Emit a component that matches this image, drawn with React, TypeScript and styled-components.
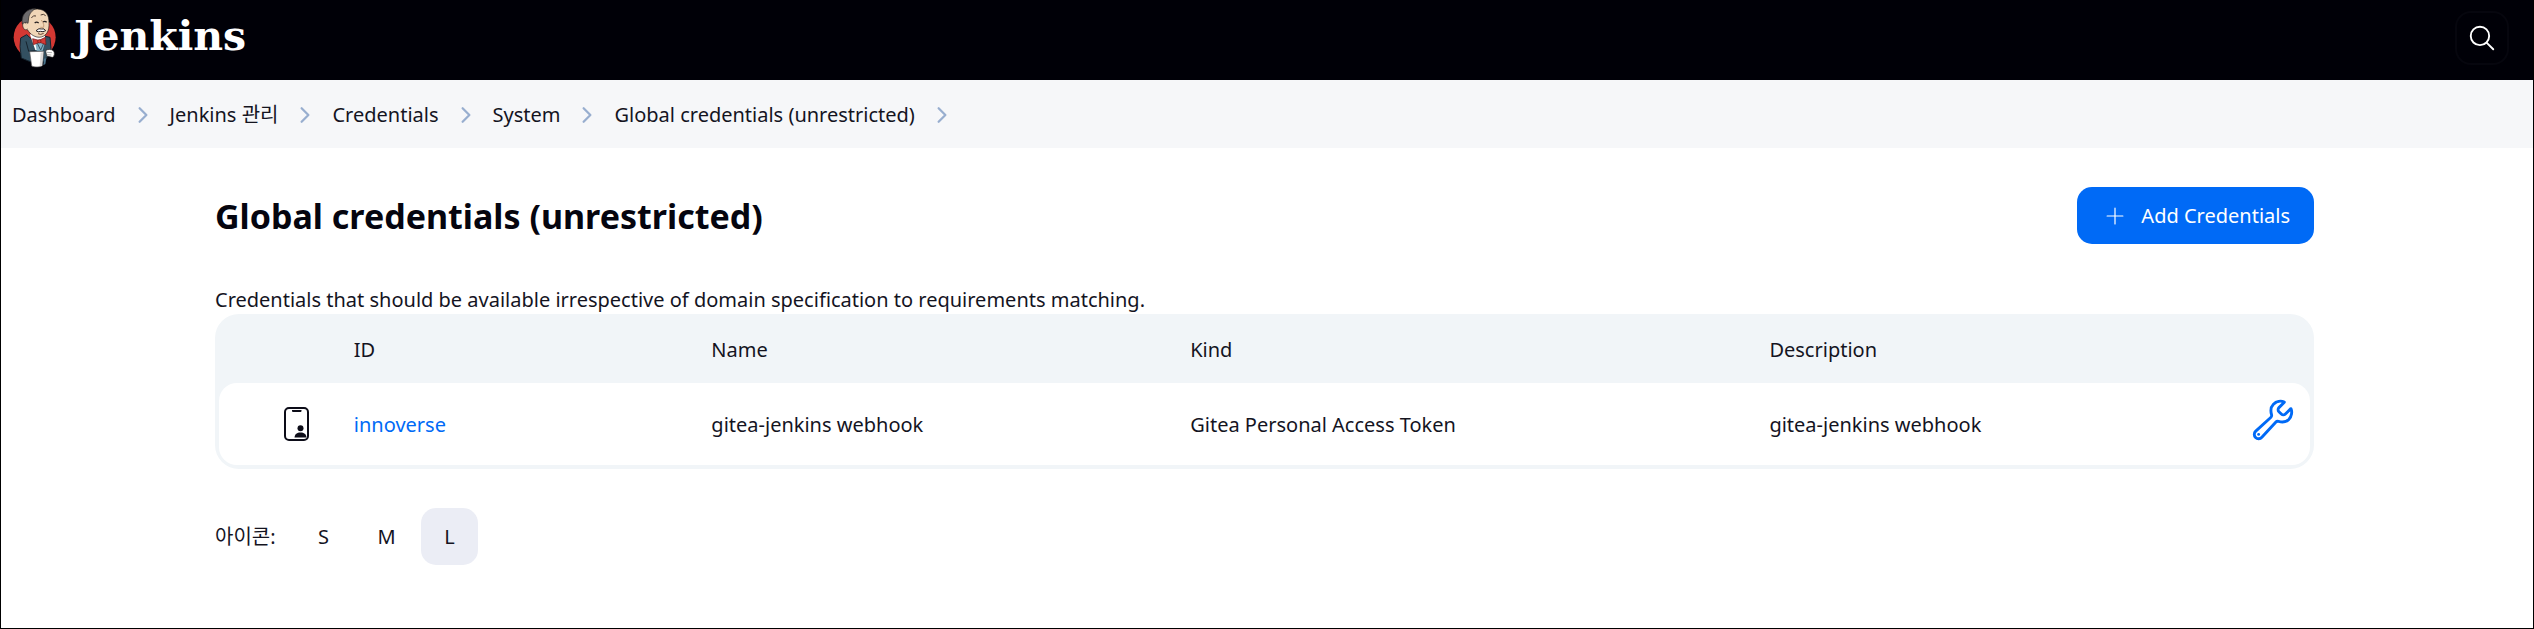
import React from "react";
import styled, { createGlobalStyle } from "styled-components";
import {
  IoAddOutline,
  IoBuildOutline,
  IoChevronForwardOutline,
  IoSearchOutline,
} from "react-icons/io5";

const GlobalStyle = createGlobalStyle`
  *, *::before, *::after { box-sizing: border-box; }
  body {
    margin: 0;
    background: #ffffff;
    color: #14141f;
    font-family: "Noto Sans", "Noto Sans CJK KR", sans-serif;
    font-size: 20px;
    line-height: 30px;
  }
  button { font: inherit; color: inherit; border: 0; cursor: pointer; }
  a { color: inherit; text-decoration: none; }
`;

const Page = styled.div`
  display: flex;
  flex-direction: column;
  min-height: 100vh;
  border: solid #000000;
  border-width: 0 1px 1px;
`;

const Header = styled.header`
  display: flex;
  align-items: center;
  justify-content: space-between;
  height: 80px;
  padding: 0 24px 4px 11px;
  background: #000007;
  color: #ffffff;
`;

const Brand = styled.a`
  display: flex;
  align-items: center;
  gap: 16px;
`;

const Wordmark = styled.span`
  padding-bottom: 4px;
  font-family: "DejaVu Serif", serif;
  font-size: 41px;
  font-weight: 700;
  line-height: 48px;
`;

const SearchButton = styled.button`
  display: flex;
  align-items: center;
  justify-content: center;
  width: 54px;
  height: 54px;
  border: 2px solid #06060e;
  border-radius: 16px;
  background: transparent;
  color: #ffffff;
  font-size: 30px;
`;

const Breadcrumbs = styled.nav`
  background: #f6f7f9;
`;

const CrumbList = styled.ol`
  display: flex;
  align-items: center;
  height: 68px;
  margin: 0;
  padding: 2px 11px 0;
  list-style: none;
`;

const Crumb = styled.li`
  display: flex;
  align-items: center;
  white-space: nowrap;

  svg {
    width: 24px;
    height: 24px;
    margin: 0 15px;
    color: #98aecf;
  }
`;

const Main = styled.main`
  padding: 39px 219px 60px 214px;
`;

const TitleBar = styled.div`
  display: flex;
  align-items: center;
  justify-content: space-between;
`;

const Title = styled.h1`
  margin: 0;
  font-size: 34px;
  line-height: 48px;
  font-weight: 700;
  color: #05050f;
`;

const AddButton = styled.button`
  display: flex;
  align-items: center;
  gap: 12px;
  height: 57px;
  padding: 0 24px;
  border-radius: 15px;
  background: #006af6;
  color: #ffffff;

  svg {
    width: 28px;
    height: 28px;
  }

  svg path {
    stroke-width: 22px;
  }
`;

const Intro = styled.p`
  margin: 41px 0 0;
  line-height: 29px;
`;

const TableFrame = styled.div`
  padding: 0 4px 4px;
  border-radius: 24px;
  background: #f1f5f8;
`;

const Table = styled.table`
  width: 100%;
  table-layout: fixed;
  border-collapse: separate;
  border-spacing: 0;
`;

const Column = styled.col<{ $width: string }>`
  width: ${(p) => p.$width};
`;

const HeadCell = styled.th`
  height: 69px;
  padding: 2px 24px 0;
  text-align: left;
  font-weight: 400;
`;

const Cell = styled.td`
  height: 82px;
  padding: 2px 24px 0;
  background: #ffffff;

  &:first-child { border-radius: 18px 0 0 18px; }
  &:last-child { border-radius: 0 18px 18px 0; }
`;

const IconCell = styled(Cell)`
  padding: 0 16px 0 65px;

  svg { display: block; }
`;

const ActionCell = styled(Cell)`
  padding: 0 14px 8px;
`;

const CredentialLink = styled.a`
  color: #006af6;
`;

const UpdateLink = styled.a`
  display: flex;
  justify-content: flex-end;
  color: #006af6;
  font-size: 46px;
`;

const SizeBar = styled.div`
  display: flex;
  align-items: center;
  gap: 6px;
  margin-top: 39px;
`;

const SizeLabel = styled.span`
  width: 74px;
`;

const SizeButton = styled.button<{ $active?: boolean }>`
  width: 57px;
  height: 57px;
  padding: 0;
  border-radius: 15px;
  background: ${(p) => (p.$active ? "#ebedf5" : "transparent")};
`;

const ButlerLogo = () => (
  <svg width="46" height="64" viewBox="36 18 138 192" aria-hidden="true">
    <circle cx="104" cy="112" r="63" fill="#d33833" />
    <path d="M62 114 L80 104 L104 126 L132 108 L150 112 L153 146 L146 166 L132 184 L88 184 L64 174 L60 140 Z" fill="#335061" stroke="#15232e" strokeWidth="3" />
    <path d="M90 104 L102 96 L134 102 L136 120 L124 150 L106 150 Z" fill="#ffffff" />
    <path d="M106 128 L136 124 L128 152 L110 152 Z" fill="#81b0c4" />
    <path d="M112 130 L122 150 L132 128" fill="none" stroke="#335061" strokeWidth="3" />
    <path d="M74 62 C72 36 90 27 112 27 C138 28 148 46 147 70 C148 91 141 106 124 111 C106 115 90 102 83 90 C74 84 72 70 74 62 Z" fill="#f0d6b7" stroke="#231f20" strokeWidth="2" />
    <path d="M67 72 C62 46 78 26 108 25 C94 33 88 42 86 54 L84 70 L78 66 L72 74 Z" fill="#6d6b6d" stroke="#231f20" strokeWidth="2" />
    <path d="M79 71 C70 62 63 76 73 88 Q78 92 83 87" fill="#f0d6b7" stroke="#231f20" strokeWidth="2" />
    <path d="M94 54 Q100 44 108 48" fill="none" stroke="#4b3a30" strokeWidth="3" />
    <path d="M122 45 Q131 40 137 47" fill="none" stroke="#4b3a30" strokeWidth="3" />
    <path d="M104 69 Q110 64 116 69 M129 66 Q135 62 140 67" fill="none" stroke="#231f20" strokeWidth="4" />
    <path d="M124 60 Q135 76 130 82 L121 82" fill="none" stroke="#ad7d58" strokeWidth="2" />
    <path d="M108 92 Q117 83 125 87 Q133 84 137 92 Q128 97 122 94 Q114 98 108 92 Z" fill="#ffffff" stroke="#231f20" strokeWidth="3" />
    <path d="M114 101 Q122 106 131 100" fill="none" stroke="#6b4633" strokeWidth="3" />
    <path d="M98 116 L117 121 L136 112 L138 134 L119 127 L100 134 Z" fill="#d33833" stroke="#6f1819" strokeWidth="2" />
    <circle cx="118" cy="124" r="5" fill="#d33833" stroke="#6f1819" strokeWidth="2" />
    <path d="M78 124 L86 154 L106 152" fill="none" stroke="#15232e" strokeWidth="3" />
    <path d="M137 152 C142 147 154 147 160 152 C165 158 164 169 157 172 L140 168 Z" fill="#ffffff" stroke="#231f20" strokeWidth="2" />
    <path d="M141 157 L156 158 M141 164 L154 165" stroke="#8c8c8c" strokeWidth="2" />
    <path d="M89 155 L131 154 L127 197 C120 202 102 202 95 198 Z" fill="#ffffff" stroke="#565457" strokeWidth="2" />
    <path d="M122 158 L119 199 L126 197 L130 156 Z" fill="#dcd9d8" />
    <path d="M132 176 L139 174 L136 192 L130 196 Z" fill="#49728b" />
  </svg>
);

const CredentialIcon = () => (
  <svg width="26" height="34" viewBox="0 0 26 34" aria-hidden="true">
    <rect x="1" y="1" width="23" height="32" rx="4" fill="none" stroke="#0c0c18" strokeWidth="2" />
    <path d="M8 3h9.500v1a1 1 0 0 1-1 1H9a1 1 0 0 1-1-1z" fill="#0c0c18" />
    <circle cx="16.500" cy="21.300" r="3" fill="#0c0c18" />
    <path d="M10.500 30.500c.4-3.600 2.400-5 6-5s5.600 1.400 6 5z" fill="#0c0c18" />
  </svg>
);

const crumbs = ["Dashboard", "Jenkins 관리", "Credentials", "System", "Global credentials (unrestricted)"];
const sizes = ["S", "M", "L"];

const credentials = [
  {
    id: "innoverse",
    name: "gitea-jenkins webhook",
    kind: "Gitea Personal Access Token",
    description: "gitea-jenkins webhook",
  },
];

export default function App() {
  return (
    <Page>
      <GlobalStyle />
      <Header>
        <Brand href="#">
          <ButlerLogo />
          <Wordmark>Jenkins</Wordmark>
        </Brand>
        <SearchButton type="button" aria-label="Search">
          <IoSearchOutline />
        </SearchButton>
      </Header>
      <Breadcrumbs aria-label="Breadcrumb">
        <CrumbList>
          {crumbs.map((crumb) => (
            <Crumb key={crumb}>
              <a href="#">{crumb}</a>
              <IoChevronForwardOutline aria-hidden="true" />
            </Crumb>
          ))}
        </CrumbList>
      </Breadcrumbs>
      <Main>
        <TitleBar>
          <Title>Global credentials (unrestricted)</Title>
          <AddButton type="button">
            <IoAddOutline aria-hidden="true" />
            Add Credentials
          </AddButton>
        </TitleBar>
        <Intro>
          Credentials that should be available irrespective of domain specification to requirements matching.
        </Intro>
        <TableFrame>
          <Table>
            <colgroup>
              <Column $width="5.3%" />
              <Column $width="17.1%" />
              <Column $width="22.9%" />
              <Column $width="27.7%" />
              <Column $width="23%" />
              <Column $width="4%" />
            </colgroup>
            <thead>
              <tr>
                <HeadCell aria-label="Icon" />
                <HeadCell>ID</HeadCell>
                <HeadCell>Name</HeadCell>
                <HeadCell>Kind</HeadCell>
                <HeadCell>Description</HeadCell>
                <HeadCell aria-label="Actions" />
              </tr>
            </thead>
            <tbody>
              {credentials.map((item) => (
                <tr key={item.id}>
                  <IconCell>
                    <CredentialIcon />
                  </IconCell>
                  <Cell>
                    <CredentialLink href="#">{item.id}</CredentialLink>
                  </Cell>
                  <Cell>{item.name}</Cell>
                  <Cell>{item.kind}</Cell>
                  <Cell>{item.description}</Cell>
                  <ActionCell>
                    <UpdateLink href="#" aria-label="Update">
                      <IoBuildOutline />
                    </UpdateLink>
                  </ActionCell>
                </tr>
              ))}
            </tbody>
          </Table>
        </TableFrame>
        <SizeBar>
          <SizeLabel>아이콘:</SizeLabel>
          {sizes.map((size) => (
            <SizeButton key={size} type="button" $active={size === "L"} aria-pressed={size === "L"}>
              {size}
            </SizeButton>
          ))}
        </SizeBar>
      </Main>
    </Page>
  );
}
